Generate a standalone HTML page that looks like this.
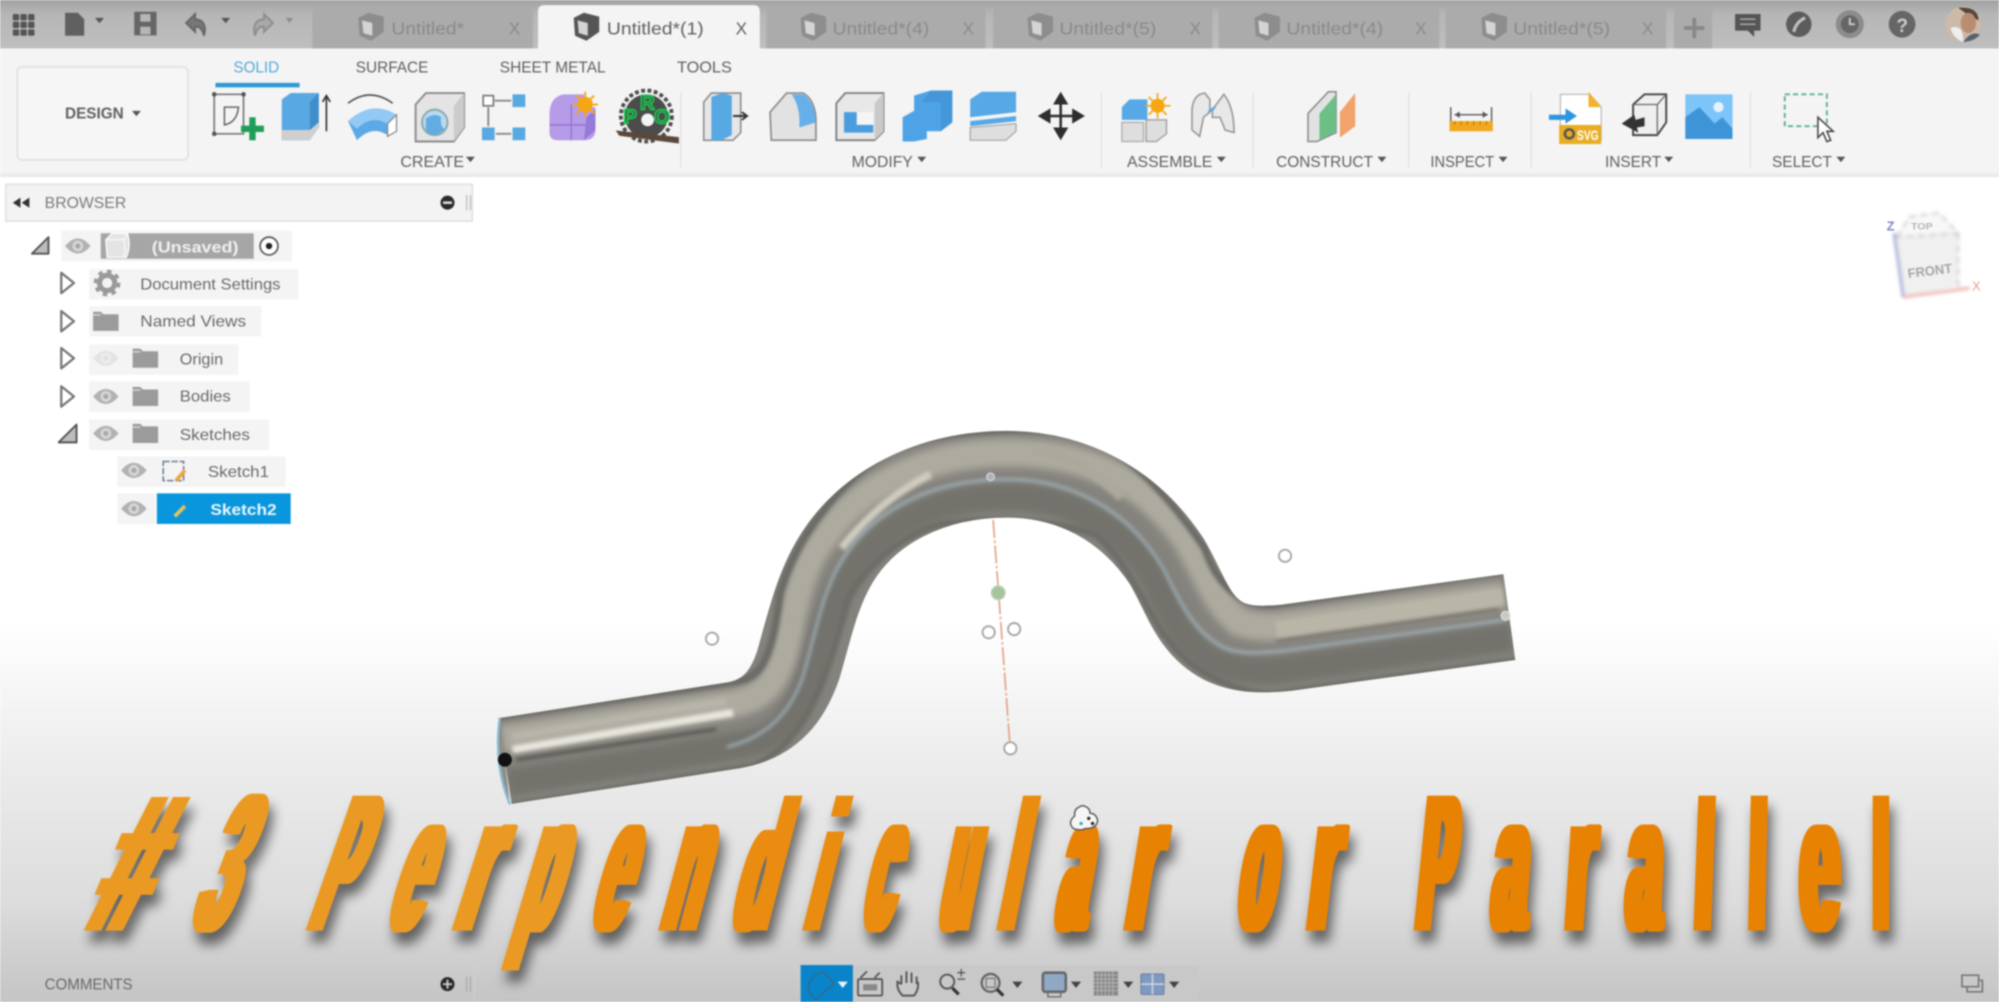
<!DOCTYPE html>
<html><head><meta charset="utf-8"><title>Untitled</title>
<style>
html,body{margin:0;padding:0;background:#fff;width:1999px;height:1002px;overflow:hidden}
svg{display:block;filter:blur(.7px)}
text{font-family:"Liberation Sans",sans-serif}
.t{font-size:13.5px}
.rb{font-size:12.5px;fill:#5f5f5f}
.tr{font-size:12.5px;fill:#696969}
.ti text{font-weight:700;font-size:151px;stroke-width:2;stroke-linejoin:miter}
</style></head><body>
<svg width="1999" height="1002" viewBox="0 0 1568 786" xmlns="http://www.w3.org/2000/svg">
<defs>
<linearGradient id="bg" x1="0" y1="0" x2="0" y2="786" gradientUnits="userSpaceOnUse">
<stop offset="0" stop-color="#fff"/><stop offset=".62" stop-color="#fff"/><stop offset=".76" stop-color="#ececec"/><stop offset=".9" stop-color="#dcdcdc"/><stop offset="1" stop-color="#c4c4c4"/></linearGradient>
<linearGradient id="top" x1="0" y1="0" x2="0" y2="1"><stop offset="0" stop-color="#a2a2a2"/><stop offset=".3" stop-color="#b6b6b6"/><stop offset="1" stop-color="#bebebe"/></linearGradient>
<filter id="b3" x="-20%" y="-20%" width="140%" height="140%"><feGaussianBlur stdDeviation="3"/></filter>
<filter id="b1" x="-20%" y="-20%" width="140%" height="140%"><feGaussianBlur stdDeviation="1.4"/></filter>
<filter id="tf" filterUnits="userSpaceOnUse" x="0" y="580" width="1568" height="206" color-interpolation-filters="sRGB">
<feMorphology in="SourceAlpha" operator="dilate" radius="3.6 0" result="ma"/>
<feOffset in="ma" dx="3" dy="9"/><feGaussianBlur stdDeviation="4.5"/><feComponentTransfer result="sh"><feFuncA type="linear" slope=".55"/></feComponentTransfer>
<feMorphology in="SourceGraphic" operator="dilate" radius="3.6 0" result="m"/>
<feMerge><feMergeNode in="sh"/><feMergeNode in="m"/></feMerge>
</filter>
<path id="tube" d="M396 597L575 569C605 564 618 545 626 522C634 495 640 465 655 440C680 398 730 372 790 372C840 372 885 395 915 440C930 465 935 490 960 503C975 510 990 510 1010 508L1184 484" fill="none"/>
<path id="tubeO" d="M394 580L575 552C598 548 610 535 617 505C624 470 630 440 648 420C675 380 730 355 790 355C850 355 895 375 928 420C945 445 950 470 972 488C985 492 995 492 1005 491L1180 467" fill="none"/>
<path id="tubeI" d="M398 614L580 585C610 580 625 565 638 525C648 495 650 470 675 440C700 405 745 390 790 390C830 390 870 405 900 445C915 470 920 495 945 515C965 527 985 527 1005 526L1186 500" fill="none"/>
<mask id="tm" maskUnits="userSpaceOnUse" x="300" y="300" width="1000" height="400"><use href="#tube" stroke="#fff" stroke-width="68"/></mask>
<g id="eye"><path d="M-10 0Q0-12 10 0Q0 12-10 0Z" fill="#b2b2b2"/><circle r="4.200" fill="#d6d6d6"/><circle r="2" fill="#a8a8a8"/></g>
<g id="fold"><path d="M-10-7.500h6l2 2h12v13h-20z" fill="#9b9b9b"/><path d="M-10-5h6" stroke="#ddd" stroke-width="1"/></g>
<path id="arr" d="M-5-8L5 0L-5 8Z" fill="#fff" stroke="#777" stroke-width="1.800" stroke-linejoin="round"/>
<g id="down"><path d="M-3.500-2H3.500L0 2.200Z" fill="#555"/></g>
<g id="cube"><path d="M-10-7L-2-11L10-8V4L0 11L-9 7Z" fill="currentColor"/><path d="M-7-5L1-3V7L-6 5Z" fill="#d4d4d4"/></g>
</defs>

<rect width="1568" height="786" fill="url(#bg)"/>

<!-- top bar -->
<rect width="1568" height="38" fill="url(#top)"/>
<g fill="#555"><rect x="10" y="11" width="5" height="5" rx="1"/><rect x="16" y="11" width="5" height="5" rx="1"/><rect x="22" y="11" width="5" height="5" rx="1"/><rect x="10" y="17" width="5" height="5" rx="1"/><rect x="16" y="17" width="5" height="5" rx="1"/><rect x="22" y="17" width="5" height="5" rx="1"/><rect x="10" y="23" width="5" height="5" rx="1"/><rect x="16" y="23" width="5" height="5" rx="1"/><rect x="22" y="23" width="5" height="5" rx="1"/></g>
<path d="M51 10H61L66 15V28H51Z" fill="#606060"/><use href="#down" x="78" y="16"/>
<path d="M106 10H122V27H106Z" fill="#666" stroke="#666" stroke-width="1.500"/><rect x="110" y="11" width="8" height="6" fill="#b6b6b6"/><rect x="110" y="21" width="8" height="6" fill="#b6b6b6"/>
<path d="M146 18L153 11V15Q163 16 160 28Q158 20 153 21V25Z" fill="#777" stroke="#666" stroke-width="1.500"/><use href="#down" x="177" y="16"/>
<path d="M214 18L207 11V15Q197 16 200 28Q202 20 207 21V25Z" fill="#a8a8a8" stroke="#8d8d8d" stroke-width="1.500"/><path d="M224 14h6l-3 4z" fill="#8d8d8d"/>

<!-- tabs -->
<g fill="#ababab">
<path d="M245 38V10Q245 5 250 5H414Q418 5 418 10V38Z"/><path d="M601 38V10Q601 5 606 5H769Q773 5 773 10V38Z"/><path d="M779 38V10Q779 5 784 5H947Q951 5 951 10V38Z"/><path d="M956 38V10Q956 5 961 5H1125Q1129 5 1129 10V38Z"/><path d="M1134 38V10Q1134 5 1139 5H1303Q1307 5 1307 10V38Z"/><path d="M1313 38V10Q1313 5 1318 5H1339Q1343 5 1343 10V38Z"/>
</g>
<path d="M422 40V9Q422 4 427 4H591Q596 4 596 9V40Z" fill="#f4f4f4"/>
<g color="#8d8d8d"><use href="#cube" x="291" y="21"/><use href="#cube" x="638" y="21"/><use href="#cube" x="816" y="21"/><use href="#cube" x="994" y="21"/><use href="#cube" x="1172" y="21"/></g>
<g color="#555"><use href="#cube" x="460" y="21"/></g>
<g class="t" fill="#8a8a8a">
<text x="307" y="27" textLength="57" lengthAdjust="spacingAndGlyphs">Untitled*</text>
<text x="653" y="27" textLength="76" lengthAdjust="spacingAndGlyphs">Untitled*(4)</text>
<text x="831" y="27" textLength="76" lengthAdjust="spacingAndGlyphs">Untitled*(5)</text>
<text x="1009" y="27" textLength="76" lengthAdjust="spacingAndGlyphs">Untitled*(4)</text>
<text x="1187" y="27" textLength="76" lengthAdjust="spacingAndGlyphs">Untitled*(5)</text>
<text x="399" y="27">X</text><text x="755" y="27">X</text><text x="933" y="27">X</text><text x="1110" y="27">X</text><text x="1288" y="27">X</text>
</g>
<g class="t" fill="#606060"><text x="476" y="27" textLength="76" lengthAdjust="spacingAndGlyphs">Untitled*(1)</text><text x="577" y="27">X</text></g>
<path d="M1329 14V30M1321 22H1337" stroke="#888" stroke-width="3"/>
<!-- right icons -->
<path d="M1361 11H1381V24H1376V29L1371 24H1361Z" fill="#555"/><path d="M1365 15h12M1365 19h12" stroke="#bbb"/>
<circle cx="1411" cy="19" r="10" fill="#5c5c5c"/><path d="M1407 25Q1409 17 1416 14" stroke="#c0c0c0" stroke-width="2.500" fill="none"/>
<circle cx="1451" cy="19" r="11" fill="#8c8c8c"/><circle cx="1451" cy="19" r="7" fill="#666"/><path d="M1451 14V19H1455" stroke="#ccc" stroke-width="1.500" fill="none"/>
<circle cx="1492" cy="19" r="10.500" fill="#666"/><text x="1487.500" y="25" font-size="15" font-weight="700" fill="#ccc">?</text>
<circle cx="1540" cy="19" r="14" fill="#cdb9a8"/><path d="M1536 6Q1552 5 1552 16L1544 12Z" fill="#54463c"/><ellipse cx="1544" cy="18" rx="6" ry="8" fill="#b98d72"/><path d="M1530 22Q1540 18 1540 33Q1532 30 1530 22Z" fill="#eee"/><path d="M1540 33Q1546 24 1553 27Q1550 32 1540 33Z" fill="#57626c"/>

<!-- ribbon -->
<rect y="38" width="1568" height="99" fill="#f4f4f4"/><rect y="136" width="1568" height="3" fill="#ebebeb"/>
<rect x="13.500" y="52.500" width="134" height="73" rx="4" fill="#f6f6f6" stroke="#e2e2e2" stroke-width="1.500"/>
<text x="51" y="93" font-size="12.500" font-weight="700" fill="#606060" textLength="46" lengthAdjust="spacingAndGlyphs">DESIGN</text><use href="#down" x="107" y="89"/>
<text x="183" y="57" class="rb" style="fill:#55aadb" textLength="36" lengthAdjust="spacingAndGlyphs">SOLID</text>
<text x="279" y="57" class="rb" textLength="57" lengthAdjust="spacingAndGlyphs">SURFACE</text>
<text x="392" y="57" class="rb" textLength="83" lengthAdjust="spacingAndGlyphs">SHEET METAL</text>
<text x="531" y="57" class="rb" textLength="43" lengthAdjust="spacingAndGlyphs">TOOLS</text>
<rect x="169" y="65" width="66" height="3.500" fill="#2d98d4"/>
<g stroke="#e4e4e4" stroke-width="1.200"><path d="M534 72V132M864 72V132M983 72V132M1105 72V132M1201 72V132M1373 72V132"/></g>
<g class="rb">
<text x="314" y="131" textLength="50" lengthAdjust="spacingAndGlyphs">CREATE</text><text x="668" y="131" textLength="48" lengthAdjust="spacingAndGlyphs">MODIFY</text><text x="884" y="131" textLength="67" lengthAdjust="spacingAndGlyphs">ASSEMBLE</text><text x="1001" y="131" textLength="76" lengthAdjust="spacingAndGlyphs">CONSTRUCT</text><text x="1122" y="131" textLength="50" lengthAdjust="spacingAndGlyphs">INSPECT</text><text x="1259" y="131" textLength="44" lengthAdjust="spacingAndGlyphs">INSERT</text><text x="1390" y="131" textLength="47" lengthAdjust="spacingAndGlyphs">SELECT</text></g>
<use href="#down" x="369" y="125"/><use href="#down" x="723" y="125"/><use href="#down" x="958" y="125"/><use href="#down" x="1084" y="125"/><use href="#down" x="1179" y="125"/><use href="#down" x="1309" y="125"/><use href="#down" x="1444" y="125"/>

<!-- create icons -->
<path d="M168 74H191V105H168Z" fill="none" stroke="#777" stroke-width="1.300"/><g fill="#555"><circle cx="168" cy="74" r="1.800"/><circle cx="191" cy="74" r="1.800"/><circle cx="168" cy="105" r="1.800"/></g>
<path d="M176 84H187Q186 96 176 98Z" fill="none" stroke="#666" stroke-width="1.200"/>
<path d="M198 92V110M189 101H207" stroke="#1f9e5a" stroke-width="5"/>
<path d="M221 78L228 73H250V100L243 110H221Z" fill="#58a8e4"/><path d="M243 80L250 73V100L243 105Z" fill="#3f8ecb"/><path d="M221 102H243L250 96V100L243 110H221Z" fill="#cfcfcf"/><path d="M256 103V76M253 80L256 75L259 80" stroke="#333" stroke-width="1.300" fill="none"/>
<path d="M273 81Q290 68 308 81" stroke="#555" fill="none" stroke-width="1.300"/>
<path d="M273 95Q292 78 311 90L304 97V106Q292 98 280 110Z" fill="#5da9e6"/><path d="M273 95Q292 78 311 90L304 97Q291 90 280 101Z" fill="#93c9f5"/><path d="M304 97L311 90V103L304 107Z" fill="#fff" stroke="#888"/>
<path d="M326 82L334 73H364V100L356 111H326Z" fill="#e4e4e4" stroke="#8a8a8a" stroke-width="1.500"/><path d="M356 83L364 73V100L356 111Z" fill="#cbcbcb"/><circle cx="341" cy="96" r="10" fill="#bcd8ef" stroke="#8aa" stroke-width="1.500"/><path d="M334 93Q341 88 346 92Q345 100 349 101Q340 110 334 102Z" fill="#62ace4"/>
<g fill="#58a8e2"><rect x="402" y="74" width="10" height="10"/><rect x="378" y="100" width="10" height="10"/><rect x="402" y="100" width="10" height="10"/></g><rect x="379" y="75" width="8" height="8" fill="#fff" stroke="#777" stroke-width="1.300"/><path d="M388 79H401M383 84V99M389 105H401" stroke="#888" stroke-width="1.500"/>
<path d="M431 90Q431 76 442 74H458V84H467V102Q467 110 458 110H438Q431 110 431 104Z" fill="#b69be8"/><path d="M431 98H460M448 82V110" stroke="#8f72cc"/><path d="M460 92L467 86V102L458 110Z" fill="#9679d8"/>
<circle cx="459" cy="82" r="6" fill="#f6a513"/><path d="M459 72V92M449 82H469M452 75L466 89M466 75L452 89" stroke="#f6a513" stroke-width="1.500"/>
<circle cx="507" cy="91" r="17" fill="#4b4b4b"/><circle cx="507" cy="91" r="20" fill="none" stroke="#4b4b4b" stroke-width="3" stroke-dasharray="3 2"/><circle cx="508" cy="94" r="5" fill="#f4f4f4"/>
<path d="M484 103L532 108V112L486 106Z" fill="#5b483a" stroke="#5b483a"/>
<g font-size="16" font-weight="700" fill="none" stroke="#16c94c" stroke-width="1.300"><text x="489" y="97">P</text><text x="502" y="86">R</text><text x="513" y="97">O</text></g>

<!-- modify icons -->
<path d="M552 80L558 73H581V104L575 110H552Z" fill="#e6e6e6" stroke="#8a8a8a" stroke-width="1.200"/><path d="M558 76L567 73L574 75V106L566 110H558Z" fill="#58a8e4"/><path d="M575 91H585M582 88L586 91L582 94" stroke="#333" stroke-width="1.500" fill="none"/>
<path d="M604 88L617 73H630Q639 78 640 93V110H605Z" fill="#e2e2e2" stroke="#8a8a8a" stroke-width="1.300"/><path d="M621 74H630Q639 80 640 96L627 100Q628 84 621 74Z" fill="#66afe8"/>
<path d="M656 81L663 73H693V103L686 110H656Z" fill="#e8e8e8" stroke="#808080" stroke-width="1.500"/><path d="M686 81L693 73V103L686 110Z" fill="#c9c9c9"/><path d="M662 88H685V104H662Z" fill="#f5f5f5"/><path d="M662 88H672V98H685V104H662Z" fill="#4a9ee0"/>
<path d="M708 92L717 87V75L730 71H747V96L738 103H727V109L717 111H708Z" fill="#4ea3e6"/><path d="M730 71H747V96L738 103V80H723Z" fill="#3f8fd0" opacity=".6"/>
<path d="M761 78L770 72H797V88L761 92Z" fill="#57a8e6"/><path d="M761 95L797 91V95L761 99Z" fill="#57a8e6"/><path d="M761 100L797 97V103L789 110H761Z" fill="#dedede" stroke="#999" stroke-width=".800"/>
<g fill="#2d2d2d"><path d="M832 72L838 82H826Z"/><path d="M832 110L838 100H826Z"/><path d="M814 91L824 85V97Z"/><path d="M851 91L841 85V97Z"/></g><path d="M832 78V104M820 91H845" stroke="#2d2d2d" stroke-width="2"/>

<!-- assemble -->
<path d="M880 84L886 78H900V94H880Z" fill="#56a8e6"/><path d="M880 96H897V111H880Z" fill="#dedede" stroke="#aaa"/><path d="M899 94H915V105L907 111H899Z" fill="#dedede" stroke="#999"/>
<circle cx="908" cy="83" r="5.500" fill="#f6a513"/><path d="M908 73V93M898 83H918M901 76L915 90M915 76L901 90" stroke="#f6a513" stroke-width="1.300"/>
<path d="M935 86Q936 74 945 73L949 78V88L944 92L941 107L935 102Z" fill="#e8e8e8" stroke="#999" stroke-width="1.300"/><path d="M951 86L960 74Q968 84 968 104L961 102L957 92L951 92Z" fill="#e8e8e8" stroke="#999" stroke-width="1.300"/><path d="M948 88L953 84" stroke="#56a8e6" stroke-width="2"/>

<!-- construct -->
<path d="M1026 89L1042 72H1048V104L1033 111H1026Z" fill="#e2e2e2" stroke="#8a8a8a" stroke-width="1.200"/><path d="M1035 89L1048 74V103L1035 110Z" fill="#6cbf86"/><path d="M1051 88L1063 73V99L1051 108Z" fill="#f2a26a"/>
<!-- inspect -->
<path d="M1138 84V97M1170 84V97M1141 90H1167" stroke="#666" stroke-width="1.200" fill="none"/><path d="M1141 90l4-2.500v5zM1167 90l-4-2.500v5z" fill="#555"/><rect x="1137" y="95" width="34" height="8" fill="#f2a81e"/><path d="M1141 95v3M1146 95v3M1151 95v3M1156 95v3M1161 95v3M1166 95v3" stroke="#b77f10"/>
<!-- insert -->
<path d="M1224 74H1247L1256 84V110H1224Z" fill="#fff" stroke="#bbb"/><path d="M1246 72L1256 84H1246Z" fill="#f2b22d"/>
<path d="M1215 90H1228V85L1237 91L1228 97V94H1215Z" fill="#2d95e0"/><rect x="1223" y="98" width="33" height="15" fill="#e8ad25"/><circle cx="1231" cy="105" r="3.500" fill="none" stroke="#555" stroke-width="2"/><text x="1237" y="110" font-size="11" font-weight="700" fill="#fff" textLength="17" lengthAdjust="spacingAndGlyphs">SVG</text>
<path d="M1281 82L1290 74H1307V96L1300 106H1281Z" fill="#efefef" stroke="#444" stroke-width="1.500"/><path d="M1281 82H1300V106M1300 82L1307 74" fill="none" stroke="#666"/><path d="M1272 97L1282 90L1283 94L1290 92V99L1284 100L1285 104Z" fill="#333"/>
<rect x="1322" y="74" width="37" height="35" fill="#7dc4f8"/><path d="M1322 109V92L1333 84L1345 97L1351 92L1359 101V109Z" fill="#3d95d8"/><circle cx="1348" cy="84" r="4" fill="#e7f2fa"/>
<!-- select -->
<rect x="1400" y="74" width="33" height="25" fill="none" stroke="#5faf8c" stroke-width="1.500" stroke-dasharray="4 2.500"/>
<path d="M1426 92V108L1430 104L1433 111L1436 110L1433 103L1438 103Z" fill="#fff" stroke="#444" stroke-width="1.200"/>

<!-- browser -->
<rect x="4.500" y="144.500" width="366" height="29" fill="#f3f3f3" stroke="#dcdcdc"/>
<path d="M16 155L10 159L16 163ZM23 155L17 159L23 163Z" fill="#333"/>
<text x="35" y="163" font-size="12.500" fill="#7a7a7a" textLength="64" lengthAdjust="spacingAndGlyphs">BROWSER</text>
<circle cx="351" cy="159" r="5.500" fill="#2a2a2a"/><rect x="347.500" y="158" width="7" height="2" fill="#ddd"/><path d="M366 153V165M369 153V165" stroke="#bbb"/>

<!-- tree -->
<g fill="#f4f4f4"><rect x="48" y="181" width="181" height="24"/><rect x="70" y="211" width="164" height="24"/><rect x="70" y="240" width="135" height="24"/><rect x="70" y="270" width="117" height="24"/><rect x="70" y="299" width="126" height="24"/><rect x="70" y="329" width="141" height="24"/><rect x="92" y="358" width="132" height="24"/><rect x="92" y="387" width="30" height="24"/></g>
<path d="M25 199L38 186V199Z" fill="#bcbcbc" stroke="#555" stroke-width="1.500" stroke-linejoin="round"/>
<path d="M46 347L60 333V347Z" fill="#bcbcbc" stroke="#555" stroke-width="1.500" stroke-linejoin="round"/>
<use href="#arr" x="53" y="222"/><use href="#arr" x="53" y="252"/><use href="#arr" x="53" y="281"/><use href="#arr" x="53" y="311"/>
<use href="#eye" x="61" y="193"/><use href="#eye" x="83" y="311"/><use href="#eye" x="83" y="340"/><use href="#eye" x="105" y="369"/><use href="#eye" x="105" y="399"/>
<use href="#eye" x="83" y="281" opacity=".25"/>
<rect x="79" y="183" width="120" height="20" fill="#a6a6a6"/><path d="M83 188L88 183H100Q103 193 99 202H84Z" fill="#e4e4e4" stroke="#fff"/><path d="M83 188H97L100 183M97 188Q99 196 97 202" fill="none" stroke="#fff" stroke-width=".800"/>
<text x="119" y="198" font-size="12.500" font-weight="700" fill="#f0f0f0" textLength="68" lengthAdjust="spacingAndGlyphs">(Unsaved)</text>
<circle cx="211" cy="193" r="7" fill="#fff" stroke="#555" stroke-width="1.300"/><circle cx="211" cy="193" r="2.500" fill="#222"/>
<circle cx="84" cy="222" r="6" fill="none" stroke="#9a9a9a" stroke-width="4"/><circle cx="84" cy="222" r="9" fill="none" stroke="#9a9a9a" stroke-width="3" stroke-dasharray="3.500 3.500"/>
<use href="#fold" x="83" y="252"/><use href="#fold" x="114" y="281"/><use href="#fold" x="114" y="311"/><use href="#fold" x="114" y="340"/>
<g class="tr"><text x="110" y="227" textLength="110" lengthAdjust="spacingAndGlyphs">Document Settings</text><text x="110" y="256" textLength="83" lengthAdjust="spacingAndGlyphs">Named Views</text><text x="141" y="286" textLength="34" lengthAdjust="spacingAndGlyphs">Origin</text><text x="141" y="315" textLength="40" lengthAdjust="spacingAndGlyphs">Bodies</text><text x="141" y="345" textLength="55" lengthAdjust="spacingAndGlyphs">Sketches</text><text x="163" y="374" textLength="48" lengthAdjust="spacingAndGlyphs">Sketch1</text></g>
<path d="M128 362H144V377H128Z" fill="none" stroke="#6a7d8c" stroke-width="1.200" stroke-dasharray="5 1.500"/><path d="M138 377L145 369" stroke="#efa640" stroke-width="3"/>
<rect x="123" y="387" width="105" height="24" fill="#0a96dc"/><path d="M137 405L145 397" stroke="#e3c060" stroke-width="3"/>
<text x="165" y="404" font-size="12.500" font-weight="700" fill="#eaf6ff" textLength="52" lengthAdjust="spacingAndGlyphs">Sketch2</text>

<!-- tube -->
<g mask="url(#tm)">
<use href="#tube" stroke="#85837d" stroke-width="70"/>
<use href="#tubeO" stroke="#adaa9f" stroke-width="22" filter="url(#b3)"/>
<use href="#tubeI" stroke="#73726c" stroke-width="22" filter="url(#b3)"/>
<path d="M390 562L580 534C600 530 606 510 612 465C625 420 660 375 700 352C740 335 830 332 860 345C900 365 935 415 945 430C955 460 975 476 1000 474L1178 448" fill="none" stroke="#6c6b66" stroke-width="6" filter="url(#b1)"/>
<path d="M400 632L590 601C630 585 648 535 665 470C680 440 720 410 750 410C800 403 850 415 860 420C885 440 905 490 915 500C935 530 975 545 1000 544L1190 518" fill="none" stroke="#6d6c66" stroke-width="5" filter="url(#b1)"/>
<g filter="url(#b1)" fill="none">
<path d="M402 588L575 559" stroke="#e8e6de" stroke-width="6"/>
<path d="M405 596L562 572" stroke="#55534f" stroke-width="2.500"/>
<path d="M402 578L570 550" stroke="#b8b5aa" stroke-width="6"/>
<path d="M1001 494L1179 468" stroke="#bab6a7" stroke-width="13"/>
<path d="M1001 503L1176 478" stroke="#787670" stroke-width="3"/>
<path d="M660 430Q690 392 730 372" stroke="#cfccc0" stroke-width="6"/>
<path d="M810 352Q850 360 880 390" stroke="#aca99b" stroke-width="8"/>
<path d="M570 586Q615 575 630 530C640 495 645 465 660 440C685 400 730 376 790 376C840 376 885 400 912 445C925 470 935 495 960 508C975 514 990 512 1010 510L1182 486" stroke="#a4b6c0" stroke-width="2.500" opacity=".8"/>
</g>
</g>
<path d="M392 563Q387 600 400 631" fill="#8f8d87" stroke="#86bcd6" stroke-width="1.800"/>
<circle cx="396" cy="596" r="5.500" fill="#111"/>

<!-- sketch overlay -->
<path d="M779 408L792 582" stroke="#e3a284" stroke-width="1.300" stroke-dasharray="14 2 2 2" fill="none"/>
<g fill="#fff" stroke="#a8a8a8" stroke-width="1.500"><circle cx="558.500" cy="501" r="4.800"/><circle cx="1008" cy="436" r="4.800"/><circle cx="775.500" cy="496" r="4.800"/><circle cx="795.500" cy="493.500" r="4.800"/><circle cx="792.500" cy="587" r="4.800"/></g>
<circle cx="783" cy="465" r="5.500" fill="#a4c49e" stroke="#c8d8c4"/>
<circle cx="777" cy="374" r="3" fill="#a9b4b8" stroke="#d5d5d5"/><circle cx="1181" cy="483" r="3.500" fill="#c8c8c4" stroke="#ddd"/>

<!-- view cube -->
<g filter="url(#b1)">
<path d="M1488 186L1493 233L1536 225V183Z" fill="#f0f0f0"/><path d="M1488 186L1498 170L1521 167L1536 183Z" fill="#f8f8f8"/>
<path d="M1488 186L1498 170L1521 167L1536 183L1488 186M1536 183V225" fill="none" stroke="#aaa" stroke-dasharray="6 3"/>
<path d="M1486 183L1493 233" stroke="#6a78c8" stroke-width="1.600"/><path d="M1493 233L1545 226" stroke="#ea8a80" stroke-width="1.600"/>
</g>
<text x="1496" y="216" font-size="10.500" font-weight="700" fill="#a6a6a6" transform="rotate(-7 1514 210)" textLength="35" lengthAdjust="spacingAndGlyphs">FRONT</text>
<text x="1499" y="180" font-size="7.500" font-weight="700" fill="#b4b4b4" textLength="17" lengthAdjust="spacingAndGlyphs">TOP</text>
<text x="1480" y="181" font-size="10" font-weight="700" fill="#7d86c8">Z</text><text x="1547" y="228" font-size="10" fill="#e89a92">X</text>

<!-- comments bar -->
<text x="35" y="776" font-size="12.500" fill="#6b6b6b" textLength="69" lengthAdjust="spacingAndGlyphs">COMMENTS</text>
<circle cx="351" cy="772" r="5.500" fill="#2a2a2a"/><path d="M351 768.500V775.500M347.500 772H354.500" stroke="#ccc" stroke-width="1.500"/><path d="M366 766V778M369 766V778" stroke="#aaa"/>
<path d="M372 756V786" stroke="#cfcfcf"/>

<!-- nav bar -->
<rect x="628" y="757" width="312" height="29" fill="#c8c8c8"/>
<rect x="628" y="757" width="41" height="29" fill="#0a84c8"/>
<path d="M634 772Q640 762 646 763Q652 768 654 772Q646 778 640 784Q634 780 634 772Z" fill="none" stroke="#2d6d95" stroke-width="1.300"/>
<path d="M657 770H665L661 775Z" fill="#e8f4fc"/>
<rect x="673" y="768" width="19" height="13" rx="1" fill="none" stroke="#555" stroke-width="1.400"/><rect x="677" y="772" width="11" height="5" fill="#888"/><path d="M675 767L680 762M686 767L690 763" stroke="#555" stroke-width="1.400"/>
<path d="M707 772V765M711 771V762M715 771V763M719 772V766M707 772L704 770Q703 776 708 781H717Q721 776 720 770" fill="none" stroke="#555" stroke-width="1.500"/>
<circle cx="743" cy="770" r="5.500" fill="none" stroke="#555" stroke-width="1.500"/><path d="M747 775L752 780" stroke="#333" stroke-width="2.500"/><path d="M751 763H757M754 760V766M751 768H757" stroke="#555"/>
<circle cx="777" cy="771" r="7" fill="none" stroke="#666" stroke-width="1.800"/><rect x="773.500" y="767.500" width="7" height="7" fill="none" stroke="#777"/><path d="M782 776L787 781" stroke="#333" stroke-width="2.500"/>
<path d="M794 770H802L798 775Z" fill="#444"/>
<rect x="818" y="763" width="18" height="15" rx="2" fill="#8fa8c4" stroke="#666" stroke-width="2"/><path d="M822 778V782H832V778" stroke="#666" fill="none"/><path d="M840 770H848L844 775Z" fill="#444"/>
<rect x="858" y="762" width="19" height="19" fill="#888"/><path d="M861 762V781M864 762V781M867 762V781M870 762V781M873 762V781M858 765H877M858 768H877M858 771H877M858 774H877M858 777H877" stroke="#b8b8b8" stroke-width=".700"/><path d="M881 770H889L885 775Z" fill="#444"/>
<rect x="895" y="764" width="18" height="16" rx="1" fill="#7f9ac0" stroke="#6d83a8"/><path d="M904 764V780M895 772H913" stroke="#cfd8e4" stroke-width="1.200"/><path d="M917 770H925L921 775Z" fill="#444"/>
<path d="M1539 765H1552V774H1539ZM1543 774V778H1555V769H1552" fill="none" stroke="#777" stroke-width="1.300"/>

<!-- title -->
<g class="ti" filter="url(#tf)">
<g fill="#ea9a22" stroke="#ea9a22">
<text transform="matrix(.5 0 -.4 1 66 729)">#</text>
<text transform="matrix(.33 0 -.376 1 148 729)">3</text>
<text transform="matrix(.27 0 -.35 1 241 729)">P</text>
<text transform="matrix(.3 0 -.33 1 302 729)">e</text>
<text transform="matrix(.4 0 -.32 1 354 729)">r</text>
<text transform="matrix(.31 0 -.3 1 403 729)">p</text>
</g>
<g fill="#e98c10" stroke="#e98c10">
<text transform="matrix(.3 0 -.285 1 462 729)">e</text>
<text transform="matrix(.31 0 -.27 1 517 729)">n</text>
<text transform="matrix(.32 0 -.25 .95 572 729)">d</text>
<text transform="matrix(.3 0 -.24 .95 630 729)">i</text>
<text transform="matrix(.27 0 -.22 1 675 729)">c</text>
<text transform="matrix(.26 0 -.2 1 735 729)">u</text>
<text transform="matrix(.32 0 -.19 .95 782 729)">l</text>
</g>
<g fill="#e88202" stroke="#e88202">
<text transform="matrix(.27 0 -.18 1 827 729)">a</text>
<text transform="matrix(.38 0 -.165 1 881 729)">r</text>
<text transform="matrix(.3 0 -.14 1 969 729)">o</text>
<text transform="matrix(.38 0 -.12 1 1024 729)">r</text>
<text transform="matrix(.27 0 -.1 1 1110 729)">P</text>
<text transform="matrix(.32 0 -.08 1 1169 729)">a</text>
<text transform="matrix(.36 0 -.065 1 1227 729)">r</text>
<text transform="matrix(.32 0 -.05 1 1275 729)">a</text>
<text transform="matrix(.3 0 -.035 .95 1329 729)">l</text>
<text transform="matrix(.28 0 -.02 .95 1372 729)">l</text>
<text transform="matrix(.36 0 -.01 1 1412 729)">e</text>
<text transform="matrix(.26 0 0 .95 1470 729)">l</text>
</g>
</g>

<!-- cursor -->
<path d="M849 632Q842 634 843 640Q837 645 842 650Q848 652 851 650Q860 650 861 644Q860 638 855 638Q855 633 849 632Z" fill="#f6f6f6" stroke="#555" stroke-width="1.100"/><circle cx="854" cy="642" r="1.300" fill="#222"/><circle cx="857" cy="646" r="1.300" fill="#222"/><circle cx="848" cy="646" r="1.300" fill="#3a9bd8"/>
</svg>
</body></html>
